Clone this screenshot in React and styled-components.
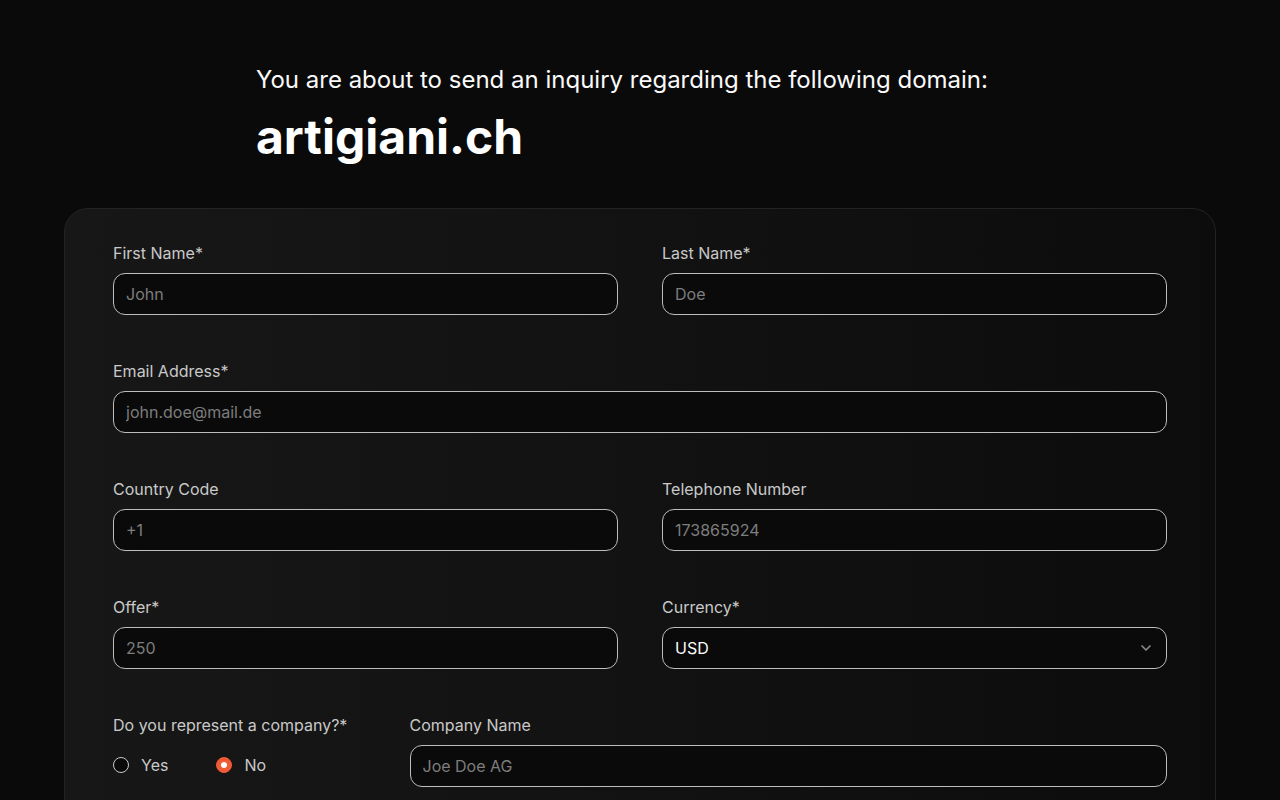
import React, { useState } from 'react';
import styled, { createGlobalStyle } from 'styled-components';

const GlobalStyle = createGlobalStyle`
  * { box-sizing: border-box; }
  body {
    margin: 0;
    background: #0a0a0a;
    font-family: Inter, "Noto Sans", sans-serif;
    color: #fafafa;
  }
`;

const Page = styled.main`
  min-height: 100vh;
  padding: 64px 0 64px;
`;

const Intro = styled.header`
  max-width: 768px;
  margin: 0 auto 42px;
`;

const Lead = styled.p`
  margin: 0 0 12px;
  font-size: 24px;
  line-height: 32px;
  color: #fafafa;
`;

const Domain = styled.h1`
  margin: 0;
  font-size: 48px;
  line-height: 58px;
  font-weight: 700;
  color: #ffffff;
`;

const Card = styled.form`
  max-width: 1152px;
  margin: 0 auto;
  padding: 32px 48px 48px;
  border: 1px solid #232323;
  border-radius: 24px;
  background: linear-gradient(90deg, #171717 0%, #121212 50%, #0c0c0c 100%);
  display: flex;
  flex-direction: column;
  gap: 44px;
`;

const Row = styled.div`
  display: grid;
  grid-template-columns: ${p => p.$cols || '1fr 1fr'};
  gap: 44px;
`;

const Field = styled.label`
  display: flex;
  flex-direction: column;
  gap: 8px;
`;

const Label = styled.span`
  font-size: 16px;
  line-height: 24px;
  color: #c9c9c9;
`;

const Input = styled.input`
  height: 42px;
  width: 100%;
  padding: 0 12px;
  border: 1px solid #bdbdbd;
  border-radius: 12px;
  background: #0a0a0a;
  color: #fafafa;
  font: inherit;
  font-size: 16px;
  outline: none;

  &::placeholder {
    color: #7d7d7d;
  }
`;

const SelectWrap = styled.div`
  position: relative;
`;

const Select = styled.select`
  appearance: none;
  height: 42px;
  width: 100%;
  padding: 0 12px;
  border: 1px solid #bdbdbd;
  border-radius: 12px;
  background: #0a0a0a;
  color: #fafafa;
  font: inherit;
  font-size: 16px;
  outline: none;
`;

const Chevron = styled.svg`
  position: absolute;
  right: 13px;
  top: 50%;
  transform: translateY(-50%);
  pointer-events: none;
`;

const RadioGroup = styled.div`
  display: flex;
  align-items: center;
  gap: 48px;
  height: 40px;
`;

const RadioOption = styled.label`
  display: flex;
  align-items: center;
  gap: 12px;
  font-size: 16px;
  color: #c9c9c9;
  cursor: pointer;
`;

const RadioDot = styled.span`
  width: 16px;
  height: 16px;
  border-radius: 50%;
  border: 1px solid ${p => (p.$checked ? '#f05a35' : '#c9c9c9')};
  background: ${p => (p.$checked ? '#f05a35' : '#0a0a0a')};
  display: flex;
  align-items: center;
  justify-content: center;

  &::after {
    content: '';
    width: 6px;
    height: 6px;
    border-radius: 50%;
    background: #fff;
    display: ${p => (p.$checked ? 'block' : 'none')};
  }
`;

function App() {
  const [company, setCompany] = useState('no');

  return (
    <Page>
      <GlobalStyle />
      <Intro>
        <Lead>You are about to send an inquiry regarding the following domain:</Lead>
        <Domain>artigiani.ch</Domain>
      </Intro>

      <Card onSubmit={e => e.preventDefault()}>
        <Row>
          <Field>
            <Label>First Name*</Label>
            <Input placeholder="John" />
          </Field>
          <Field>
            <Label>Last Name*</Label>
            <Input placeholder="Doe" />
          </Field>
        </Row>

        <Row $cols="1fr">
          <Field>
            <Label>Email Address*</Label>
            <Input placeholder="john.doe@mail.de" />
          </Field>
        </Row>

        <Row>
          <Field>
            <Label>Country Code</Label>
            <Input placeholder="+1" />
          </Field>
          <Field>
            <Label>Telephone Number</Label>
            <Input placeholder="173865924" />
          </Field>
        </Row>

        <Row>
          <Field>
            <Label>Offer*</Label>
            <Input placeholder="250" />
          </Field>
          <Field as="div">
            <Label>Currency*</Label>
            <SelectWrap>
              <Select defaultValue="USD">
                <option>USD</option>
                <option>EUR</option>
                <option>CHF</option>
              </Select>
              <Chevron width="16" height="16" viewBox="0 0 24 24" fill="none" stroke="#8a8a8a" strokeWidth="2.5" strokeLinecap="round" strokeLinejoin="round">
                <path d="m6 9 6 6 6-6" />
              </Chevron>
            </SelectWrap>
          </Field>
        </Row>

        <Row $cols="1fr 3fr">
          <Field as="div">
            <Label>Do you represent a company?*</Label>
            <RadioGroup>
              <RadioOption onClick={() => setCompany('yes')}>
                <RadioDot $checked={company === 'yes'} />
                Yes
              </RadioOption>
              <RadioOption onClick={() => setCompany('no')}>
                <RadioDot $checked={company === 'no'} />
                No
              </RadioOption>
            </RadioGroup>
          </Field>
          <Field>
            <Label>Company Name</Label>
            <Input placeholder="Joe Doe AG" />
          </Field>
        </Row>
      </Card>
    </Page>
  );
}

export default App;
